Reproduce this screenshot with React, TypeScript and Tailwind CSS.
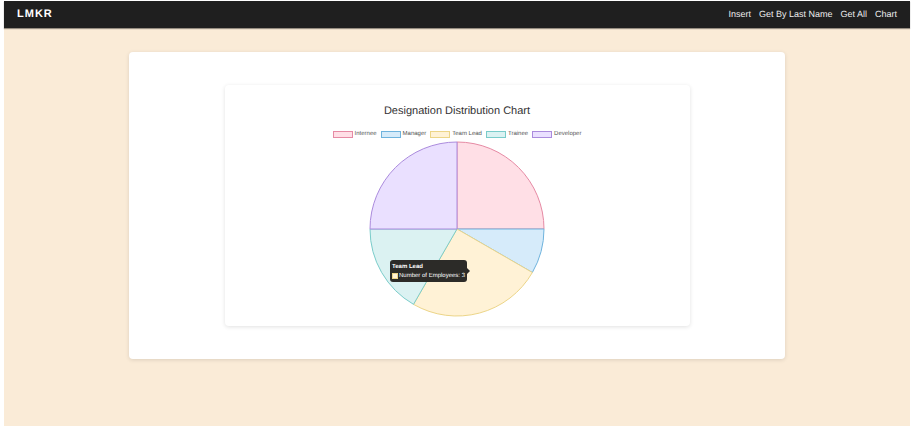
const navItems = ['Insert', 'Get By Last Name', 'Get All', 'Chart'];

type Slice = { label: string; count: number; fill: string; stroke: string };

const slices: Slice[] = [
  { label: 'Internee', count: 3, fill: '#ffdfe6', stroke: '#e68aa4' },
  { label: 'Manager', count: 1, fill: '#d6ebfa', stroke: '#6fb3dd' },
  { label: 'Team Lead', count: 3, fill: '#fff2d6', stroke: '#ecd588' },
  { label: 'Trainee', count: 2, fill: '#dbf2f2', stroke: '#7accca' },
  { label: 'Developer', count: 3, fill: '#eae0ff', stroke: '#ab8bdd' },
];

const RADIUS = 87;
const CENTER = 88;
const total = slices.reduce((sum, s) => sum + s.count, 0);

function point(count: number) {
  const angle = (count / total) * 2 * Math.PI;
  return `${CENTER + RADIUS * Math.sin(angle)} ${CENTER - RADIUS * Math.cos(angle)}`;
}

function Pie() {
  let start = 0;
  return (
    <svg viewBox="0 0 176 176" className="block h-44 w-44" role="img" aria-label="Employees by designation">
      {slices.map((s) => {
        const from = point(start);
        start += s.count;
        return (
          <path
            key={s.label}
            d={`M${CENTER} ${CENTER} L${from} A${RADIUS} ${RADIUS} 0 0 1 ${point(start)} Z`}
            fill={s.fill}
            stroke={s.stroke}
            strokeWidth="1"
            strokeLinejoin="round"
          />
        );
      })}
    </svg>
  );
}

function Legend() {
  return (
    <ul className="flex justify-center gap-1">
      {slices.map((s) => (
        <li key={s.label} className="flex items-center gap-[2px] text-[6px] leading-[7px] text-[#555]">
          <span className="h-[7px] w-5 border" style={{ backgroundColor: s.fill, borderColor: s.stroke }} />
          {s.label}
        </li>
      ))}
    </ul>
  );
}

function Tooltip() {
  return (
    <div className="absolute top-[119px] left-[21px] h-[22px] rounded-[3px] bg-[#2c2b28] px-[2px] pt-[3px] text-[6px] leading-[8px] whitespace-nowrap text-white">
      <div className="font-bold">Team Lead</div>
      <div className="mt-px flex items-center">
        <span className="mr-px h-[6px] w-[6px] shrink-0 border border-[#ecd588] bg-[#fff2d6]" />
        <span>Number of Employees: 3</span>
      </div>
      <span className="absolute top-2 left-full border-y-[3px] border-l-[3px] border-y-transparent border-l-[#2c2b28]" />
    </div>
  );
}

export default function App() {
  return (
    <div className="flex min-h-screen flex-col bg-white pt-px pr-2 pl-1 font-['Liberation_Sans',Arial,sans-serif] [text-rendering:geometricPrecision]">
      <header className="relative flex h-[27px] items-center justify-between bg-[#1f1f1f] px-[13px] pb-px shadow-[0_1px_1px_rgba(0,0,0,0.4)]">
        <a href="#home" className="text-[11px] leading-4 font-bold tracking-[1px] text-white">
          LMKR
        </a>
        <nav className="flex gap-2 text-[9px] leading-4 text-[#eee]">
          {navItems.map((item) => (
            <a key={item} href="#nav">
              {item}
            </a>
          ))}
        </nav>
      </header>
      <main className="flex-1 bg-[#faebd7] pt-6 pb-16">
        <section className="mx-auto w-[656px] max-w-full rounded bg-white py-[33px] shadow-[0_1px_4px_rgba(0,0,0,0.12)]">
          <div className="mx-auto flex w-[465px] max-w-full flex-col items-center rounded pt-[19px] pb-[9px] shadow-[0_1px_4px_rgba(0,0,0,0.12)]">
            <h1 className="text-[11px] leading-[14px] text-[#333]">Designation Distribution Chart</h1>
            <div className="mt-[13px]">
              <Legend />
            </div>
            <div className="relative mt-[3px]">
              <Pie />
              <Tooltip />
            </div>
          </div>
        </section>
      </main>
    </div>
  );
}
